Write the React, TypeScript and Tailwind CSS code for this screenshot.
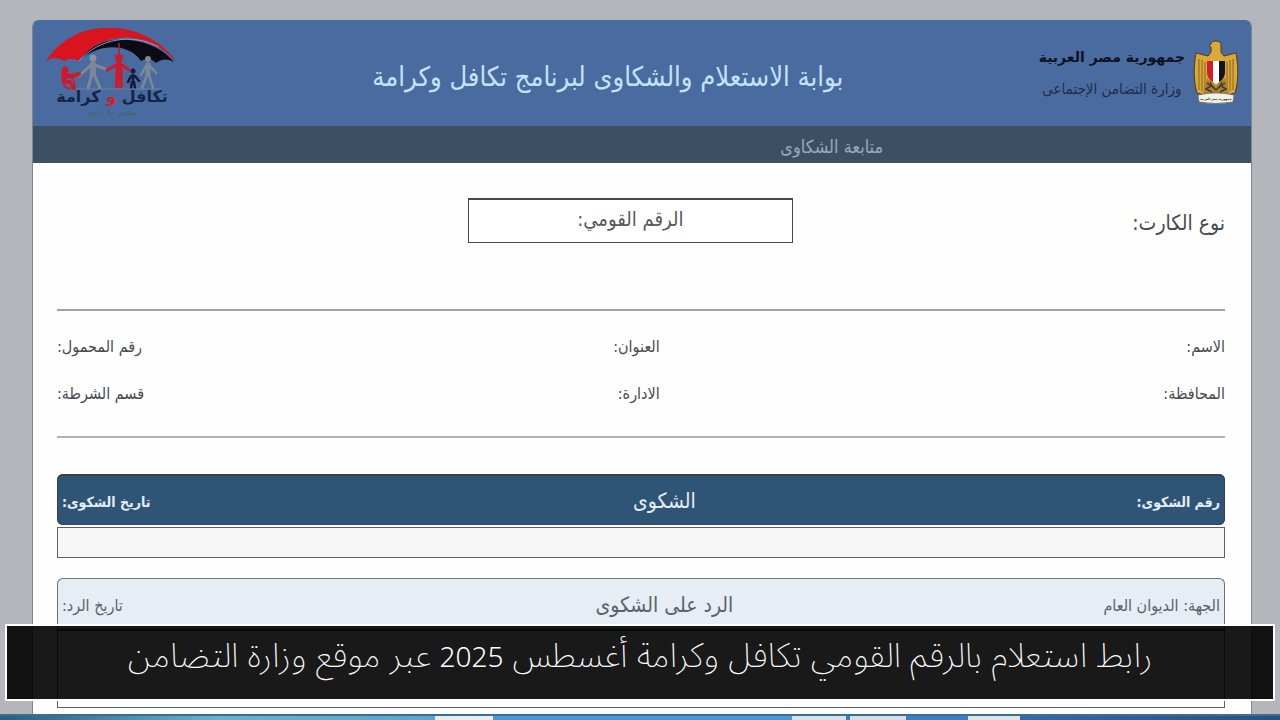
function UmbrellaLogo() {
  return (
    <svg viewBox="0 0 132 90" className="h-[90px] w-[132px]" role="img" aria-label="تكافل وكرامة">
      <path d="M1 33 C14 13 35 1 58 0 C88 -2 115 11 131 33 L127 30 C112 13 87 6 67 11 C52 15 40 23 34 33C29 30 24 30 19 33 C13 29 7 29 1 33Z" fill="#d9141f" />
      <path d="M35 32 C47 15 66 10 84 12 C104 14 119 22 129 34 C122 30 116 31 111 35 C106 30 101 30 96 33 C84 15 54 15 35 32Z" fill="#0a0b14" />
      <path d="M34 33 C54 10 88 5 114 19" fill="none" stroke="#8d9dbd" strokeWidth="1" />
      <path d="M74 15V30" stroke="#b3202c" strokeWidth="1.5" />
      <g fill="none" stroke="#7d8797" strokeLinecap="round" strokeLinejoin="round">
        <path d="M48 36V45" strokeWidth="6" />
        <path d="M46 37L34 48M50 37L60 41M47 46L43 60M49 46L55 60" strokeWidth="3" />
        <path d="M103 37V46" strokeWidth="5" />
        <path d="M101 38L96 47M105 38L111 45M102 47L97 60M104 47L108 60" strokeWidth="2.5" />
      </g>
      <circle cx="48" cy="30" r="3.5" fill="#8a91a0" />
      <circle cx="103" cy="31" r="3" fill="#7d8797" />
      <g fill="none" stroke="#ce1a2c" strokeLinecap="round" strokeLinejoin="round">
        <path d="M74 37V48" strokeWidth="7" />
        <path d="M71 37L62 42M77 37L84 42" strokeWidth="3" />
        <path d="M72 49L72 59M76 49L76 59" strokeWidth="3.5" />
      </g>
      <path d="M71 27h6v4c0 4-6 4-6 0zM69 28h10" fill="#ce1a2c" stroke="#ce1a2c" />
      <circle cx="88" cy="43" r="2.5" fill="#151b38" />
      <path d="M88 47v7M86 48l-3 6M90 48l4 5M87 54l-1 6M89 54l1 6" fill="none" stroke="#151b38" strokeWidth="2.5" strokeLinecap="round" />
      <circle cx="20" cy="42" r="3.5" fill="#ce1a2c" />
      <path d="M18 46l1 8h6l4 6M20 47l8 1 6-2" fill="none" stroke="#ce1a2c" strokeWidth="4" strokeLinecap="round" strokeLinejoin="round" />
      <circle cx="24" cy="55" r="5.5" fill="none" stroke="#ce1a2c" strokeWidth="1.5" />
      <path d="M31 61H116" stroke="#70809c" strokeWidth="1" />
      <g fontFamily="'DejaVu Sans', sans-serif" textAnchor="middle" direction="rtl">
        <text x="67" y="74" fontSize="16" fontWeight="bold" fill="#17244a">تكافل <tspan fill="#d01c2c">و</tspan> كرامة</text>
        <text x="67" y="87" fontSize="10" fill="#3f6a70">مصر بلا عوز</text>
      </g>
    </svg>
  );
}

function EagleEmblem() {
  return (
    <svg viewBox="0 0 46 66" className="h-[66px] w-[46px]" role="img" aria-label="شعار الجمهورية">
      <path d="M18 4C18 0 27 0 28 4V12L31 16L43 13C46 29 45 43 42 53L31 56H15L4 53C1 43 0 29 3 13L15 16L18 12V7L16 6Z" fill="#d9a837" stroke="#4b3c20" strokeWidth="1" />
      <path d="M6 19V50M9 20V51M12 22V49M40 19V50M37 20V51M34 22V49" stroke="#8a6521" strokeWidth="1" />
      <path d="M14 21H20V42C16 40 14 36 14 32Z" fill="#cf1f2e" />
      <path d="M20 21H26V42L23 44L20 42Z" fill="#fff" />
      <path d="M26 21H32V32C32 36 30 40 26 42Z" fill="#14141a" />
      <path d="M14 38L20 43L23 46L26 43L32 38L36 54H10Z" fill="#a98235" />
      <path d="M14 43l4 3-5 3 6 3M32 43l-4 3 5 3-6 3M20 47l3 3 3-3M17 42l3 6M29 42l-3 6" fill="none" stroke="#463a27" strokeWidth="1.5" />
      <path d="M5 55Q23 51 41 55L40 62Q23 65 6 62Z" fill="#f3f0e4" stroke="#5d5749" strokeWidth=".6" />
      <text x="23" y="60" fontSize="3" fontWeight="bold" textAnchor="middle" fill="#222" fontFamily="'DejaVu Sans', sans-serif">جمهورية مصر العربية</text>
    </svg>
  );
}

const fields = [
  ["الاسم:", "العنوان:", "رقم المحمول:"],
  ["المحافظة:", "الادارة:", "قسم الشرطة:"],
];

export default function App() {
  return (
    <div
      dir="rtl"
      lang="ar"
      className="relative flex min-h-screen flex-col bg-[#b5b6bb] font-['DejaVu_Sans_Condensed','DejaVu_Sans',sans-serif] text-[#474b50]"
    >
      <div className="mx-7 mt-5 ml-8 flex grow flex-col overflow-hidden rounded-t-md border-x border-[#7d8791] bg-[#fefefe]">
        <header className="flex h-[106px] items-center justify-between bg-[#4a6ba0] px-3">
          <div className="flex items-center gap-2">
            <EagleEmblem />
            <div className="flex flex-col items-center leading-8">
              <span className="font-['DejaVu_Sans'] text-[14px] font-bold text-[#0d1220]">جمهورية مصر العربية</span>
              <span className="text-[15px] text-[#1d2d51]">وزارة التضامن الإجتماعى</span>
            </div>
          </div>
          <h1 className="pt-2 text-[27px] text-[#c5e2fb]">بوابة الاستعلام والشكاوى لبرنامج تكافل وكرامة</h1>
          <UmbrellaLogo />
        </header>
        <nav className="flex h-[37px] items-center bg-[#3c5064] pt-1 pr-[30.2%] text-[18px]">
          <a href="#complaints" className="text-[#98a9bd]">متابعة الشكاوى</a>
        </nav>

        <main className="flex grow flex-col pt-[35px] pr-[26px] pl-6">
          <form className="flex h-[111px] items-start">
            <label htmlFor="national-id" className="w-[37%] pt-2.5 text-[21px]">نوع الكارت:</label>
            <input
              id="national-id"
              placeholder="الرقم القومي:"
              className="h-[45px] w-[325px] border border-t-2 border-[#49494c] bg-white pb-1 text-center text-[20px] placeholder:text-[#55585c]"
            />
          </form>

          <dl className="grid grid-cols-[48.4%_1fr_auto] border-t-2 border-b-2 border-t-[#a0a1a2] border-b-[#b0b1b2] pt-3 pb-[19px] text-[16px]">
            {fields.flat().map((name, i) => (
              <dt key={name} className={i % 3 === 2 ? "flex h-[47px] items-center justify-end" : "flex h-[47px] items-center"}>
                {name}
              </dt>
            ))}
          </dl>

          <table className="mt-9 w-full table-fixed border-separate border-spacing-0">
            <thead>
              <tr className="h-[51px] bg-[#2f5576] text-[#e3eef8]">
                <th className="w-[24%] rounded-r-md border border-t-2 border-l-0 border-[#34434f] px-1 pt-1 text-start text-[14px] font-bold">رقم الشكوى:</th>
                <th className="border-y border-t-2 border-[#34434f] pt-1 text-[21px] font-normal">الشكوى</th>
                <th className="w-[28%] rounded-l-md border border-t-2 border-r-0 border-[#34434f] px-1 pt-1 text-end text-[14px] font-bold">تاريخ الشكوى:</th>
              </tr>
            </thead>
            <tbody>
              <tr>
                <td colSpan={3} className="pt-0.5"><div className="h-[31px] border border-[#5f6063] bg-[#f8f7f8]" /></td>
              </tr>
            </tbody>
          </table>

          <table className="mt-5 mb-1.5 w-full grow table-fixed border-separate border-spacing-0 text-[#5d6167]">
            <thead>
              <tr className="h-[51px] bg-[#e6edf5]">
                <th className="w-[24%] rounded-tr-md border-t border-r border-[#6c7278] px-1 pt-1 text-start text-[16px] font-normal">الجهة: الديوان العام</th>
                <th className="border-t border-[#6c7278] pt-1 text-[21px] font-normal">الرد على الشكوى</th>
                <th className="w-[28%] rounded-tl-md border-t border-l border-[#6c7278] px-1 pt-1 text-end text-[16px] font-normal">تاريخ الرد:</th>
              </tr>
            </thead>
            <tbody>
              <tr>
                <td colSpan={3} className="h-[76px] border border-t-2 border-[#5f6063] bg-[#fefefe]" />
              </tr>
            </tbody>
          </table>
        </main>
      </div>

      <footer dir="ltr" className="flex h-1.5 border-t-2 border-[#426d8a] bg-linear-to-r from-[#287394] via-[#4694cf] to-[#25508a]">
        <span className="w-[34%] bg-linear-to-r from-[#226181] via-[#67b3ce] to-[#56a8d2]" />
        <span className="w-[4.5%] bg-[#e5eff0]" />
        <span className="w-[23.4%] bg-[#459bd8]" />
        <span className="w-[4.2%] bg-[#d4e2ed]" />
        <span className="ml-1 w-[4.4%] bg-[#d5dfeb]" />
        <span className="w-[4.8%] bg-[#397fc8]" />
        <span className="w-[4.1%] bg-[#dce4ec]" />
      </footer>

      <div className="absolute inset-x-[5px] top-[624px] h-[77px] border-2 border-white bg-black/90 pt-2 text-center font-['Noto_Sans_Arabic','DejaVu_Sans',sans-serif] text-[34px] leading-[44px] font-extralight text-white">
        رابط استعلام بالرقم القومي تكافل وكرامة أغسطس <span className="text-[28px] font-light">2025</span> عبر موقع وزارة التضامن
      </div>
    </div>
  );
}
